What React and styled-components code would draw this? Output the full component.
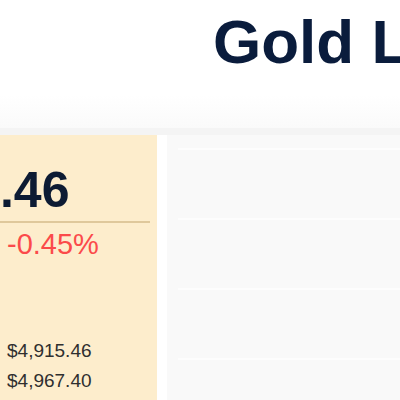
import React from "react";
import styled, { createGlobalStyle } from "styled-components";

const GlobalStyle = createGlobalStyle`
  html, body {
    margin: 0;
    padding: 0;
    background: #ffffff;
    overflow: hidden;
    font-family: "Liberation Sans", Arial, sans-serif;
  }
`;

const gridRows = [0, 1, 2, 3];

export default function App() {
  return (
    <Page>
      <GlobalStyle />
      <Header>
        <Title>Gold Live Price</Title>
      </Header>
      <Fade />
      <Band />
      <Main>
        <PriceCard>
          <Price>$4,931.46</Price>
          <Divider />
          <Pair>
            <Change>-22.31</Change>
            <Change>-0.45%</Change>
          </Pair>
          <Stats>
            <StatLabel>Day Low</StatLabel>
            <StatValue>$4,915.46</StatValue>
            <StatLabel>Day High</StatLabel>
            <StatValue>$4,967.40</StatValue>
          </Stats>
        </PriceCard>
        <ChartPanel>
          {gridRows.map((r) => (
            <GridRow key={r} />
          ))}
        </ChartPanel>
      </Main>
    </Page>
  );
}

//styles

const Page = styled.div`
  width: 400px;
  height: 400px;
  overflow: hidden;
  display: flex;
  flex-direction: column;
`;

const Header = styled.header`
  flex-shrink: 0;
  height: 95px;
  padding: 11px 0 0 213px;
  box-sizing: border-box;
`;

const Title = styled.h1`
  margin: 0;
  font-size: 62px;
  line-height: 62px;
  font-weight: 700;
  color: #0a1c3c;
  white-space: nowrap;
`;

const Fade = styled.div`
  flex-shrink: 0;
  height: 33px;
  background: linear-gradient(#ffffff, #fafafa);
`;

const Band = styled.div`
  flex-shrink: 0;
  height: 7px;
  background: #f4f4f4;
`;

const Main = styled.div`
  flex: 1 0 auto;
  display: flex;
  gap: 10px;
  margin-left: -177px;
`;

const PriceCard = styled.section`
  width: 334px;
  flex-shrink: 0;
  box-sizing: border-box;
  padding: 30px 7px 0 24px;
  background: #fdedcc;
`;

const Price = styled.div`
  font-size: 50px;
  line-height: 50px;
  font-weight: 700;
  color: #0d1b33;
  white-space: nowrap;
  margin-bottom: 6px;
`;

const Divider = styled.div`
  height: 2px;
  background: #dfc89b;
`;

const Pair = styled.div`
  margin-top: 7px;
  display: grid;
  grid-template-columns: 160px auto;
`;

const Change = styled.span`
  font-size: 29px;
  line-height: 29px;
  color: #fb4a4a;
`;

const Stats = styled.div`
  margin-top: 77px;
  display: grid;
  grid-template-columns: 160px auto;
  font-size: 19px;
  line-height: 30px;
  color: #2f2f2f;
`;

const StatLabel = styled.span`
  color: #6b6250;
`;

const StatValue = styled.span``;

const ChartPanel = styled.div`
  flex: 1;
  background: #f9f9f9;
  padding: 13px 0 0 11px;
`;

const GridRow = styled.div`
  height: 68px;
  border-top: 2px solid #fdfdfd;
`;
